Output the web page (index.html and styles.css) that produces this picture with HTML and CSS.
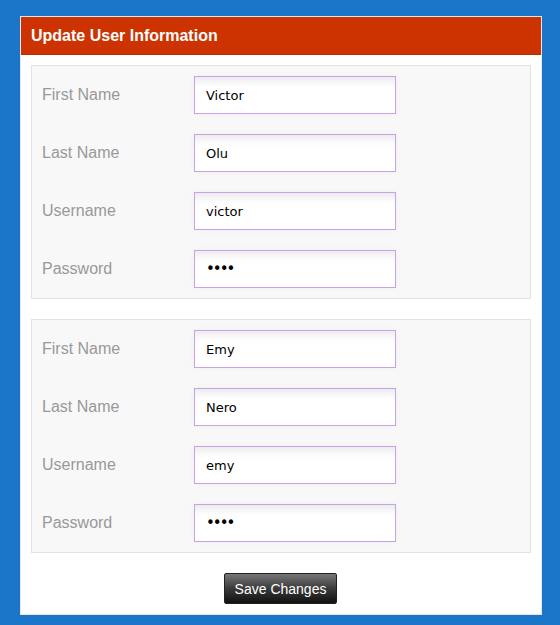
FILE: index.html
```html
<!DOCTYPE html>
<html>
<head>
<meta charset="utf-8">
<link rel="stylesheet" href="styles.css">
</head>
<body>
<div class="panel">
  <div class="panel-header">Update User Information</div>
  <form class="panel-body">
    <fieldset class="group">
      <div class="row"><label class="label">First Name</label><input class="field" type="text" value="Victor"></div>
      <div class="row"><label class="label">Last Name</label><input class="field" type="text" value="Olu"></div>
      <div class="row"><label class="label">Username</label><input class="field" type="text" value="victor"></div>
      <div class="row"><label class="label">Password</label><input class="field field-secret" type="password" value="abcd"></div>
    </fieldset>
    <fieldset class="group">
      <div class="row"><label class="label">First Name</label><input class="field" type="text" value="Emy"></div>
      <div class="row"><label class="label">Last Name</label><input class="field" type="text" value="Nero"></div>
      <div class="row"><label class="label">Username</label><input class="field" type="text" value="emy"></div>
      <div class="row"><label class="label">Password</label><input class="field field-secret" type="password" value="abcd"></div>
    </fieldset>
    <div class="actions"><button class="btn" type="button">Save Changes</button></div>
  </form>
</div>
</body>
</html>
```
FILE: styles.css
```css
html, body {
  margin: 0;
  padding: 0;
  background: #1b75c9;
  height: 100%;
}
body {
  padding: 16px 18px 0 20px;
  box-sizing: border-box;
  font-family: "Liberation Sans", Arial, sans-serif;
}
.panel {
  width: 522px;
  box-sizing: border-box;
  background: #fff;
  border: 1px solid #e6e6e6;
}
.panel-header {
  background: #cc3300;
  color: #fff;
  font-weight: bold;
  font-size: 16px;
  height: 38px;
  line-height: 37px;
  padding: 0 10px;
  border-bottom: 1px solid #b52d00;
  box-sizing: border-box;
}
.panel-body {
  margin: 0;
  padding: 10px;
  display: flex;
  flex-direction: column;
  gap: 20px;
}
.group {
  margin: 0;
  padding: 10px;
  border: 1px solid #e3e3e3;
  background: #f8f8f8;
  display: flex;
  flex-direction: column;
  gap: 20px;
  min-width: 0;
}
.row {
  display: flex;
  align-items: center;
  height: 38px;
}
.label {
  width: 152px;
  color: #999;
  font-size: 16px;
}
.field {
  width: 202px;
  height: 38px;
  box-sizing: border-box;
  margin: 0;
  padding: 0 11px;
  border: 1px solid #c9a2e6;
  background: #fff;
  font-family: "DejaVu Sans", Verdana, sans-serif;
  font-size: 13px;
  color: #000;
  outline: none;
  box-shadow: inset 0 10px 10px -6px rgba(0,0,0,0.09), 0 0 6px rgba(0,0,0,0.04);
}
.field-secret {
  font-size: 15px;
  letter-spacing: -2px;
}
.actions {
  display: flex;
  padding-left: 193px;
}
.btn {
  width: 113px;
  height: 31px;
  margin: 0;
  padding: 0;
  border: 1px solid #222;
  border-radius: 2px;
  background: linear-gradient(#777, #3a3a3a 50%, #111);
  color: #fff;
  font-family: "Liberation Sans", Arial, sans-serif;
  font-size: 14px;
}
```
